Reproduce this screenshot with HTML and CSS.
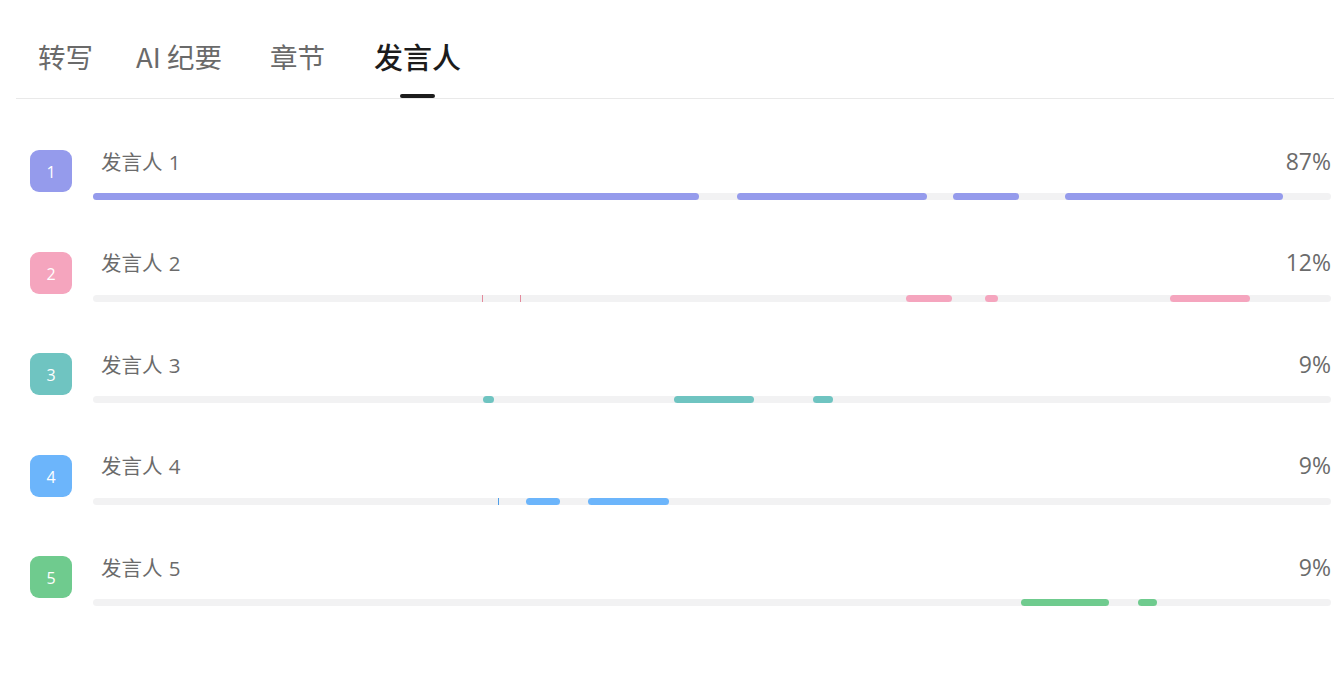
FILE: index.html
```html
<!DOCTYPE html>
<html lang="zh-CN">
<head>
<meta charset="utf-8">
<title>发言人</title>
<link rel="stylesheet" href="styles.css">
</head>
<body>
<div class="page">
  <nav class="tabs">
    <div class="tab">转写</div>
    <div class="tab tab-ai">AI 纪要</div>
    <div class="tab tab-ch">章节</div>
    <div class="tab active">发言人</div>
  </nav>
  <div class="speakers">
    <div class="row c1">
      <div class="badge">1</div>
      <div class="main">
        <div class="head"><span class="name">发言人 1</span><span class="pct">87%</span></div>
        <div class="track">
          <span class="seg" style="left:0%;width:48.95%"></span>
          <span class="seg" style="left:52.02%;width:15.35%"></span>
          <span class="seg" style="left:69.47%;width:5.33%"></span>
          <span class="seg" style="left:78.51%;width:17.61%"></span>
        </div>
      </div>
    </div>
    <div class="row c2">
      <div class="badge">2</div>
      <div class="main">
        <div class="head"><span class="name">发言人 2</span><span class="pct">12%</span></div>
        <div class="track">
          <span class="tick" style="left:31.42%"></span>
          <span class="tick" style="left:34.49%"></span>
          <span class="seg" style="left:65.67%;width:3.72%"></span>
          <span class="seg" style="left:72.05%;width:1.05%"></span>
          <span class="seg" style="left:87.00%;width:6.46%"></span>
        </div>
      </div>
    </div>
    <div class="row c3">
      <div class="badge">3</div>
      <div class="main">
        <div class="head"><span class="name">发言人 3</span><span class="pct">9%</span></div>
        <div class="track">
          <span class="seg" style="left:31.50%;width:0.89%"></span>
          <span class="seg" style="left:46.93%;width:6.46%"></span>
          <span class="seg" style="left:58.16%;width:1.62%"></span>
        </div>
      </div>
    </div>
    <div class="row c4">
      <div class="badge">4</div>
      <div class="main">
        <div class="head"><span class="name">发言人 4</span><span class="pct">9%</span></div>
        <div class="track">
          <span class="tick" style="left:32.71%"></span>
          <span class="seg" style="left:34.98%;width:2.75%"></span>
          <span class="seg" style="left:39.98%;width:6.54%"></span>
        </div>
      </div>
    </div>
    <div class="row c5">
      <div class="badge">5</div>
      <div class="main">
        <div class="head"><span class="name">发言人 5</span><span class="pct">9%</span></div>
        <div class="track">
          <span class="seg" style="left:74.96%;width:7.11%"></span>
          <span class="seg" style="left:84.41%;width:1.53%"></span>
        </div>
      </div>
    </div>
  </div>
</div>
</body>
</html>
```
FILE: styles.css
```css
html, body {
  margin: 0;
  padding: 0;
  background: #ffffff;
}
body {
  font-family: "Open Sans", "Noto Sans CJK SC", sans-serif;
  color: #666666;
}
.page {
  width: 1334px;
  height: 693px;
  overflow: hidden;
}
.tabs {
  display: flex;
  align-items: flex-start;
  margin-left: 16px;
  padding-left: 22px;
  padding-top: 36px;
  height: 62px;
  border-bottom: 1px solid #e9e9e9;
  gap: 43px;
}
.tab {
  font-family: "Noto Sans CJK SC", sans-serif;
  font-size: 27.5px;
  line-height: 40px;
  color: #6a6a6a;
  display: flex;
  flex-direction: column;
  align-items: center;
}
.tab-ai {
  margin-right: 5px;
}
.tab-ch {
  margin-right: 6px;
}
.tab.active {
  font-size: 29px;
  font-weight: 500;
  color: #1c1c1c;
}
.tab.active::after {
  content: "";
  display: block;
  width: 35px;
  height: 4px;
  border-radius: 2px;
  background: #1c1c1c;
  margin-top: 18px;
}
.speakers {
  padding-top: 51px;
  display: grid;
  grid-auto-rows: 101.5px;
}
.row {
  display: flex;
  align-items: flex-start;
  padding-left: 30px;
  padding-right: 3px;
}
.badge {
  width: 42px;
  height: 42px;
  border-radius: 9px;
  flex: 0 0 42px;
  display: flex;
  align-items: center;
  justify-content: center;
  color: #ffffff;
  font-size: 16px;
  margin-right: 21px;
  line-height: 1;
  padding-top: 2px;
  box-sizing: border-box;
}
.main {
  flex: 1;
  display: flex;
  flex-direction: column;
}
.head {
  display: flex;
  justify-content: space-between;
  align-items: center;
  height: 21px;
  padding-left: 8px;
  margin-bottom: 1px;
}
.name {
  font-size: 20.5px;
  color: #6b6b6b;
  word-spacing: 1px;
}
.pct {
  font-size: 23px;
  color: #6b6b6b;
}
.track {
  position: relative;
  height: 7px;
  margin-top: 21px;
  border-radius: 4px;
  background: #f2f2f3;
}
.seg {
  position: absolute;
  top: 0;
  height: 7px;
  border-radius: 4px;
}
.tick {
  position: absolute;
  top: 0;
  width: 1px;
  height: 7px;
}
.c1 .badge, .c1 .seg { background: #959bec; }
.c2 .badge, .c2 .seg { background: #f5a5be; }
.c2 .tick { background: #e48a9c; }
.c3 .badge, .c3 .seg { background: #6fc4c1; }
.c4 .badge, .c4 .seg { background: #6cb5fb; }
.c4 .tick { background: #4f9ee8; }
.c5 .badge, .c5 .seg { background: #6fcb8e; }
```
